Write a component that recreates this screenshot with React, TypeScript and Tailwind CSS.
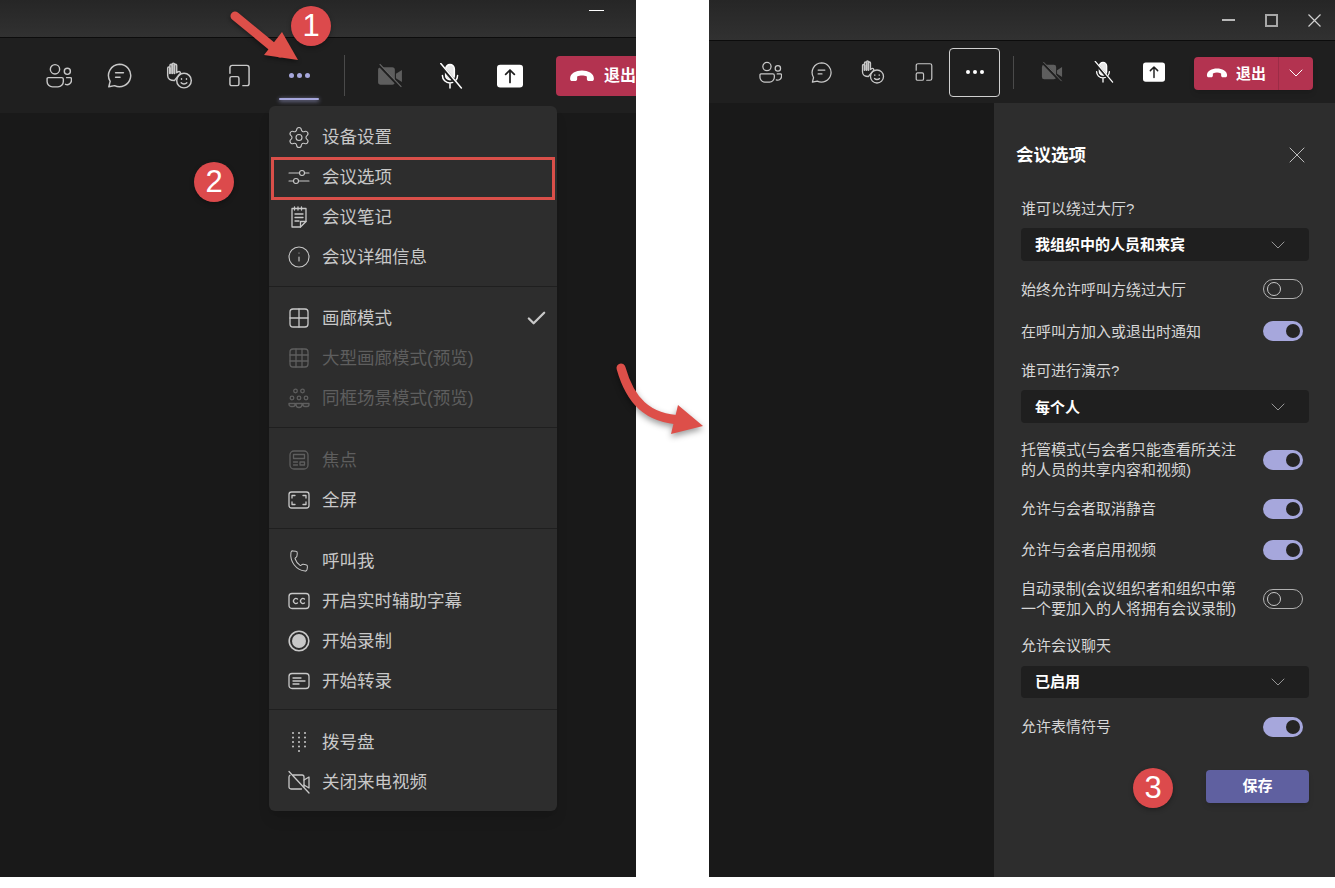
import type { ReactNode } from "react";
import { Check, ChevronDown, Info, Phone, Settings, X } from "lucide-react";

const CJK = "font-['Liberation_Sans','Noto_Sans_CJK_SC',sans-serif]";

function Ico({ size = 24, className = "", children }: { size?: number; className?: string; children: ReactNode }) {
  return (
    <svg width={size} height={size} viewBox="0 0 24 24" fill="none" stroke="currentColor" strokeWidth="1.3" strokeLinecap="round" strokeLinejoin="round" className={className}>
      {children}
    </svg>
  );
}

const PeopleIcon = ({ size }: { size: number }) => (
  <Ico size={size}>
    <circle cx="8.300" cy="5.800" r="4.300" />
    <circle cx="19.700" cy="7.700" r="2.800" />
    <path d="M2 13.500h12.500a1.500 1.500 0 0 1 1.500 1.500v2a5 5 0 0 1-5 5H6a5 5 0 0 1-5-5v-2.500a1 1 0 0 1 1-1z" />
    <path d="M19 13.500h3.500a1 1 0 0 1 1 1v1.500a4 4 0 0 1-5.500 3.700" />
  </Ico>
);
const ChatIcon = ({ size }: { size: number }) => (
  <Ico size={size}>
    <path d="M12 2a10 10 0 1 1-4.400 19L2.500 22l1.200-4.800A10 10 0 0 1 12 2z" />
    <path d="M8.500 9.500h7M8.500 13.500h4" />
  </Ico>
);
const HandIcon = ({ size }: { size: number }) => (
  <svg width={size} height={size} viewBox="0 0 24 24" fill="none" stroke="currentColor" strokeWidth="1.3" strokeLinecap="round" strokeLinejoin="round">
    <path d="M1.500 12V5.500a1 1 0 0 1 2 0V3a1 1 0 0 1 2 0V2a1 1 0 0 1 2 0v1a1 1 0 0 1 2 0v6.500l1.500-1a1.200 1.200 0 0 1 1.500 1.800L9.500 14c-1 1-1.500 1.500-2 2.500-3.500 0-6-1.500-6-4.500z" />
    <path d="M3.500 5.500V10M5.500 3v7M7.500 2v8" strokeWidth="1.800" />
    <circle cx="16" cy="16.500" r="6.500" />
    <path d="M13.500 18.500c1.200 1.300 3.800 1.300 5 0M13.800 14.800v.5M18.200 14.800v.5" />
  </svg>
);
const RoomIcon = ({ size }: { size: number }) => (
  <Ico size={size}>
    <path d="M3.500 10V5a2 2 0 0 1 2-2h13a2 2 0 0 1 2 2v14a2 2 0 0 1-2 2H15" />
    <rect x="3.500" y="13" width="8" height="8" rx="1.500" />
  </Ico>
);
const VideoOff = ({ size }: { size: number }) => (
  <svg width={size} height={size} viewBox="0 0 24 24">
    <rect x="1" y="4" width="15.500" height="16" rx="2.500" fill="#5e5e5e" />
    <path d="M17.500 10l5.500-3.500v11L17.500 14z" fill="#5e5e5e" />
    <path d="M1.500 1.500l20 21" stroke="#1f1f1f" strokeWidth="2.500" />
    <path d="M2.500 1l20 21" stroke="#6a6a6a" strokeWidth="1" />
  </svg>
);
const MicOff = ({ size }: { size: number }) => (
  <svg width={size} height={size} viewBox="0 0 24 24" fill="none" stroke="#fff" strokeWidth="1.400" strokeLinecap="round">
    <rect x="8" y="1.500" width="8" height="14" rx="4" fill="#e8e8e8" />
    <path d="M5 11.500a7 7 0 0 0 14 0M12 18.500V23" />
    <path d="M2.500 1l19 22" stroke="#1f1f1f" strokeWidth="3" />
    <path d="M3.500 .5l19 22.500" />
  </svg>
);
const ShareIcon = ({ size }: { size: number }) => (
  <svg width={size} height={size} viewBox="0 0 24 24" fill="none">
    <rect x="0" y="1.500" width="24" height="21" rx="3" fill="#fff" />
    <path d="M12 18V6.500M8 10.500l4-4 4 4" stroke="#1f1f1f" strokeWidth="1.600" strokeLinecap="round" strokeLinejoin="round" />
  </svg>
);
const HangUp = ({ size }: { size: number }) => (
  <svg width={size} height={size} viewBox="0 0 24 24" fill="#fff">
    <path d="M1 14.500C1 9.500 6.500 7 12 7s11 2.500 11 7.500c0 1.500-.8 2.200-2 2.200h-2.500c-1.200 0-2-.8-2-2v-2.200c-1.500-.8-3-1-4.500-1s-3 .2-4.500 1v2.200c0 1.200-.8 2-2 2H3c-1.200 0-2-.7-2-2.200z" />
  </svg>
);

const menuIcons: Record<string, ReactNode> = {
  settings: <Settings size={25} strokeWidth={1.1} />,
  sliders: (
    <Ico size={24} className="[stroke-width:1.100]">
      <path d="M2 8h10.500M17.500 8H22M2 16h4.500M11.500 16H22" />
      <circle cx="15" cy="8" r="2.500" />
      <circle cx="9" cy="16" r="2.500" />
    </Ico>
  ),
  notes: (
    <Ico size={24}>
      <path d="M5 3.500h14v13L13.500 22H5z" />
      <path d="M7.500 2v3M11 2v3M14.500 2v3M8 9h8M8 12.500h8M8 16h4M13.500 22v-5.500H19" />
    </Ico>
  ),
  info: <Info size={24} strokeWidth={1.1} />,
  gallery: (
    <Ico size={24}>
      <rect x="3" y="3" width="18" height="18" rx="3" />
      <path d="M12 3v18M3 12h18" />
    </Ico>
  ),
  large: (
    <Ico size={24}>
      <rect x="3" y="3" width="18" height="18" rx="3" />
      <path d="M9 3v18M15 3v18M3 9h18M3 15h18" />
    </Ico>
  ),
  together: (
    <Ico size={24}>
      <circle cx="8.500" cy="5" r="1.800" />
      <circle cx="15.500" cy="5" r="1.800" />
      <circle cx="5" cy="12" r="1.800" />
      <circle cx="12" cy="12" r="1.800" />
      <circle cx="19" cy="12" r="1.800" />
      <path d="M2 17.500h6v1a2 2 0 0 1-2 2H4a2 2 0 0 1-2-2zM9 17.500h6v1a3 3 0 0 1-6 0zM16 17.500h6v1a2 2 0 0 1-2 2h-2a2 2 0 0 1-2-2z" />
    </Ico>
  ),
  focus: (
    <Ico size={24}>
      <rect x="3" y="3" width="18" height="18" rx="4" />
      <rect x="6.500" y="6.500" width="11" height="4" />
      <path d="M6.500 14h4M6.500 17h4" />
      <rect x="13" y="14" width="4.500" height="3" />
    </Ico>
  ),
  full: (
    <Ico size={24}>
      <rect x="2" y="4" width="20" height="16" rx="2.500" />
      <path d="M5 10V7.500h3M16 7.500h3V10M19 14v2.500h-3M8 16.500H5V14" />
    </Ico>
  ),
  phone: <Phone size={22} strokeWidth={1.1} className="rotate-[8deg]" />,
  cc: (
    <Ico size={24}>
      <rect x="2" y="4.500" width="20" height="15" rx="3" />
      <path d="M10.500 10a2.500 2.500 0 1 0 0 4M17.500 10a2.500 2.500 0 1 0 0 4" />
    </Ico>
  ),
  record: (
    <svg width="24" height="24" viewBox="0 0 24 24" fill="none">
      <circle cx="12" cy="12" r="9.800" stroke="currentColor" strokeWidth="1.600" />
      <circle cx="12" cy="12" r="7" fill="currentColor" />
    </svg>
  ),
  transcript: (
    <Ico size={24}>
      <rect x="2" y="4.500" width="20" height="15" rx="3" />
      <path d="M6 9h8M6 12h12M6 15h6" />
    </Ico>
  ),
  dial: (
    <svg width="24" height="24" viewBox="0 0 24 24" fill="currentColor">
      {[6, 12, 18].flatMap((x) => [3, 7.5, 12, 16.5].map((y) => <circle key={`${x}-${y}`} cx={x} cy={y} r="1" />))}
      <circle cx="12" cy="21" r="1" />
    </svg>
  ),
  videoOff: (
    <Ico size={24}>
      <path d="M6 5h9a2 2 0 0 1 2 2v10M14.500 19H4a2 2 0 0 1-2-2V7a2 2 0 0 1 1-1.700" />
      <path d="M17 10l5-3v11l-5-3M2 1.500l20 21.500" />
    </Ico>
  ),
};

type Item = { icon: string; label: string; disabled?: boolean; checked?: boolean };

const sections: Item[][] = [
  [
    { icon: "settings", label: "设备设置" },
    { icon: "sliders", label: "会议选项" },
    { icon: "notes", label: "会议笔记" },
    { icon: "info", label: "会议详细信息" },
  ],
  [
    { icon: "gallery", label: "画廊模式", checked: true },
    { icon: "large", label: "大型画廊模式(预览)", disabled: true },
    { icon: "together", label: "同框场景模式(预览)", disabled: true },
  ],
  [
    { icon: "focus", label: "焦点", disabled: true },
    { icon: "full", label: "全屏" },
  ],
  [
    { icon: "phone", label: "呼叫我" },
    { icon: "cc", label: "开启实时辅助字幕" },
    { icon: "record", label: "开始录制" },
    { icon: "transcript", label: "开始转录" },
  ],
  [
    { icon: "dial", label: "拨号盘" },
    { icon: "videoOff", label: "关闭来电视频" },
  ],
];

const sectionPad = [
  "pt-[11px] pb-[9px]",
  "border-t border-[#1f1f1f] pt-[11px] pb-[9px]",
  "border-t border-[#1f1f1f] pt-[12px] pb-[8px]",
  "border-t border-[#1f1f1f] pt-[12px] pb-[8px]",
  "border-t border-[#1f1f1f] pt-[12px] pb-[9px]",
];

function Menu() {
  return (
    <div className="absolute left-[269px] top-[106px] w-[288px] rounded-md bg-[#2d2d2d] shadow-lg">
      {sections.map((items, i) => (
        <div key={i} className={sectionPad[i]}>
          {items.map((it) => (
            <div key={it.label} className={`flex h-10 items-center pl-[18px] pr-[9px] text-[17.500px] ${it.disabled ? "text-[#5e5e5e]" : "text-[#c8c8c8]"}`}>
              <span className="flex w-[24px] items-center justify-center">{menuIcons[it.icon]}</span>
              <span className="ml-[11px] flex-1 whitespace-nowrap">{it.label}</span>
              {it.checked && <Check size={23} strokeWidth={2.400} />}
            </div>
          ))}
        </div>
      ))}
    </div>
  );
}

function ToolBtn({ w, children }: { w: string; children: ReactNode }) {
  return <div className={`flex h-full shrink-0 items-center justify-center text-[#c8c8c8] ${w}`}>{children}</div>;
}

function LeftWindow() {
  return (
    <div className="relative h-[877px] w-[636px] shrink-0 overflow-hidden bg-[#191919]">
      <div className="flex h-[38px] items-start justify-end border-b border-[#0c0c0c] bg-gradient-to-b from-[#262626] to-[#313131] pr-[32px] pt-[10px]">
        <div className="h-px w-[15px] bg-white" />
      </div>
      <div className="flex h-[75px] items-center bg-[#1f1f1f] pl-[29px]">
        <ToolBtn w="w-[60px]"><PeopleIcon size={26} /></ToolBtn>
        <ToolBtn w="w-[60px]"><ChatIcon size={27} /></ToolBtn>
        <ToolBtn w="w-[60px]"><HandIcon size={27} /></ToolBtn>
        <ToolBtn w="w-[60px]"><RoomIcon size={27} /></ToolBtn>
        <div className="relative flex h-full w-[60px] shrink-0 items-center justify-center gap-[3px]">
          <span className="size-[5px] rounded-full bg-[#a6a7dc]" />
          <span className="size-[5px] rounded-full bg-[#a6a7dc]" />
          <span className="size-[5px] rounded-full bg-[#a6a7dc]" />
          <span className="absolute bottom-[13px] left-[10px] h-[2px] w-[40px] rounded bg-[#a6a7dc] shadow-[0_1px_4px_#a6a7dc]" />
        </div>
        <div className="ml-[15px] h-[41px] w-px shrink-0 bg-[#4a4a4a]" />
        <ToolBtn w="ml-[15px] w-[60px]"><VideoOff size={26} /></ToolBtn>
        <ToolBtn w="w-[60px]"><MicOff size={26} /></ToolBtn>
        <ToolBtn w="w-[60px]"><ShareIcon size={26} /></ToolBtn>
        <div className="ml-[16px] flex h-[40px] w-[120px] shrink-0 items-center gap-[9px] rounded-sm bg-[#b33350] pl-[13px] text-[16px] font-bold text-white">
          <HangUp size={26} />
          <span className="whitespace-nowrap">退出</span>
        </div>
      </div>
      <Menu />
    </div>
  );
}

function Toggle({ on }: { on?: boolean }) {
  return on ? (
    <span className="flex h-[20px] w-[40px] shrink-0 items-center justify-end rounded-full bg-[#a6a7dc] pr-[3px]">
      <span className="size-[14px] rounded-full bg-[#252423]" />
    </span>
  ) : (
    <span className="flex h-[20px] w-[40px] shrink-0 items-center rounded-full border border-[#b0b0b0] pl-[3px]">
      <span className="size-[14px] rounded-full border border-[#c8c8c8]" />
    </span>
  );
}

function Dropdown({ label, className }: { label: ReactNode; className: string }) {
  return (
    <div className={`flex items-center rounded-sm bg-[#1f1f1f] pl-[14px] pr-[19px] text-[15px] font-bold text-white ${className}`}>
      <span className="flex-1">{label}</span>
      <ChevronDown size={24} strokeWidth={0.7} className="text-[#c8c8c8]" />
    </div>
  );
}

function OptionRow({ label, on, className }: { label: ReactNode; on?: boolean; className: string }) {
  return (
    <div className={`flex items-center justify-between pr-[6px] text-[15px] leading-[20px] text-[#d6d6d6] ${className}`}>
      <span>{label}</span>
      <Toggle on={on} />
    </div>
  );
}

function OptionsPanel() {
  return (
    <div className="h-full w-[341px] shrink-0 bg-[#2d2d2d] pl-[22px] pr-[26px] pt-[32px]">
      <div className="flex h-[40px] items-center justify-between text-[17.500px] font-bold text-white">
        <span>会议选项</span>
        <X size={28} strokeWidth={0.8} className="-mr-[2px] text-[#c8c8c8]" />
      </div>
      <div className="pl-[5px]">
        <div className="mt-[21px] h-[24px] pt-[1px] text-[15px] leading-[24px] text-[#d6d6d6]">谁可以绕过大厅?</div>
        <Dropdown label={<span className="block pt-[2px]">我组织中的人员和来宾</span>} className="mt-[8px] h-[33px]" />
        <OptionRow label={<span className="block pt-[2px]">始终允许呼叫方绕过大厅</span>} className="mt-[13px] h-[30px]" />
        <OptionRow label={<span className="block pt-[2px]">在呼叫方加入或退出时通知</span>} on className="mt-[12px] h-[30px]" />
        <div className="mt-[12px] h-[24px] pt-[1px] text-[15px] leading-[24px] text-[#d6d6d6]">谁可进行演示?</div>
        <Dropdown label={<span className="block pt-[3px]">每个人</span>} className="mt-[8px] h-[33px]" />
        <OptionRow label={<>托管模式(与会者只能查看所关注<br />的人员的共享内容和视频)</>} on className="mt-[15px] h-[44px]" />
        <OptionRow label="允许与会者取消静音" on className="mt-[12px] h-[30px]" />
        <OptionRow label="允许与会者启用视频" on className="mt-[11px] h-[30px]" />
        <OptionRow label={<>自动录制(会议组织者和组织中第<br />一个要加入的人将拥有会议录制)</>} className="mt-[12px] h-[44px]" />
        <div className="mt-[13px] h-[24px] text-[15px] leading-[24px] text-[#d6d6d6]">允许会议聊天</div>
        <Dropdown label="已启用" className="mt-[8px] h-[32px]" />
        <OptionRow label="允许表情符号" on className="mt-[14px] h-[30px]" />
        <div className="mt-[28px] flex justify-end">
          <div className="flex h-[33px] w-[103px] items-center justify-center rounded-sm bg-[#5f60a0] text-[15px] font-bold text-white shadow-md">保存</div>
        </div>
      </div>
    </div>
  );
}

function RightWindow() {
  return (
    <div className="flex h-[877px] min-w-0 flex-1 flex-col bg-[#191919]">
      <div className="flex h-[41px] shrink-0 items-center justify-end gap-[30px] border-b border-[#0c0c0c] bg-gradient-to-b from-[#262626] to-[#313131] pr-[14px] text-[#d0d0d0]">
        <div className="h-[2px] w-[13px] bg-[#b8b8b8]" />
        <div className="size-[13px] border-2 border-[#a8a8a8]" />
        <svg width="13" height="13" viewBox="0 0 13 13" stroke="#d0d0d0" strokeWidth="1.200">
          <path d="M.5 .5l12 12M12.500 .5l-12 12" />
        </svg>
      </div>
      <div className="flex h-[62px] shrink-0 items-center bg-[#1f1f1f] pl-[36px]">
        <ToolBtn w="w-[51px]"><PeopleIcon size={23} /></ToolBtn>
        <ToolBtn w="w-[51px]"><ChatIcon size={23} /></ToolBtn>
        <ToolBtn w="w-[51px]"><HandIcon size={24} /></ToolBtn>
        <ToolBtn w="w-[51px]"><RoomIcon size={22} /></ToolBtn>
        <div className="flex h-[49px] w-[51px] shrink-0 items-center justify-center gap-[3px] rounded-sm border border-[#d0d0d0]">
          <span className="size-[4px] rounded-full bg-white" />
          <span className="size-[4px] rounded-full bg-white" />
          <span className="size-[4px] rounded-full bg-white" />
        </div>
        <div className="ml-[13px] h-[33px] w-px shrink-0 bg-[#4a4a4a]" />
        <ToolBtn w="ml-[12px] w-[51px]"><VideoOff size={22} /></ToolBtn>
        <ToolBtn w="w-[51px]"><MicOff size={22} /></ToolBtn>
        <ToolBtn w="w-[52px]"><ShareIcon size={22} /></ToolBtn>
        <div className="ml-[14px] mt-[2px] flex h-[33px] w-[119px] shrink-0 items-center rounded-sm bg-[#b33350] text-[15px] font-bold text-white shadow-md">
          <span className="flex flex-1 items-center gap-[8px] border-r border-[#9c2c46] pl-[12px] leading-[33px]">
            <HangUp size={22} />
            退出
          </span>
          <span className="flex w-[34px] justify-center">
            <ChevronDown size={24} strokeWidth={1} />
          </span>
        </div>
      </div>
      <div className="flex min-h-0 flex-1 justify-end">
        <OptionsPanel />
      </div>
    </div>
  );
}

function Badge({ n, pos }: { n: number; pos: string }) {
  return (
    <div className={`absolute flex size-[40px] items-center justify-center rounded-full bg-[#dc4a4c] font-['Liberation_Sans',sans-serif] text-[31px] text-white shadow-[0_2px_5px_rgba(0,0,0,0.3)] ${pos}`}>
      {n}
    </div>
  );
}

export default function App() {
  return (
    <div className={`relative flex h-[888px] w-[1335px] gap-[73px] overflow-hidden bg-white ${CJK}`}>
      <LeftWindow />
      <RightWindow />

      <div className="pointer-events-none absolute left-[271px] top-[157px] h-[43px] w-[284px] border-[3px] border-[#d94f49]" />

      <svg width="80" height="60" viewBox="0 0 80 60" className="absolute left-[225px] top-[8px] drop-shadow-[0_2px_2px_rgba(0,0,0,0.4)]">
        <path d="M10 8l45 37" stroke="#dd4f49" strokeWidth="9" strokeLinecap="round" />
        <path d="M73 52L57 24 39 47z" fill="#dd4f49" />
      </svg>
      <svg width="100" height="90" viewBox="0 0 100 90" className="absolute left-[610px] top-[355px] drop-shadow-[0_3px_3px_rgba(0,0,0,0.4)]">
        <path d="M11 13C20 45 37 64 72 65" fill="none" stroke="#dd4f49" strokeWidth="9" strokeLinecap="round" />
        <path d="M93 71L68 50 61 79z" fill="#dd4f49" />
      </svg>

      <Badge n={1} pos="left-[291px] top-[6px]" />
      <Badge n={2} pos="left-[194px] top-[162px]" />
      <Badge n={3} pos="left-[1133px] top-[768px]" />
    </div>
  );
}
